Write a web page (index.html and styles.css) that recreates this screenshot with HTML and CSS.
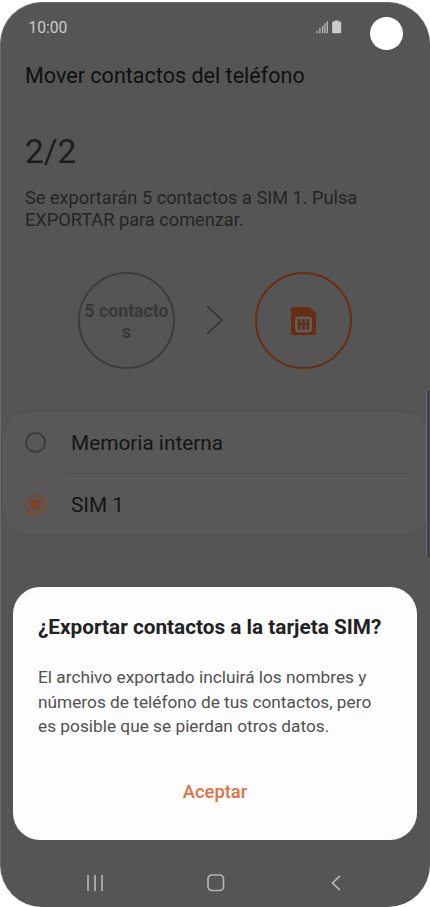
FILE: index.html
```html
<!DOCTYPE html>
<html lang="es">
<head>
<meta charset="utf-8">
<title>Mover contactos del teléfono</title>
<link rel="stylesheet" href="styles.css">
</head>
<body>
<div class="phone">
  <header class="status">
    <span class="clock">10:00</span>
    <svg class="status-icons" width="27" height="16" viewBox="0 0 27 16">
      <path class="signal" d="M1.2 10.7v2.5M3.9 8v5.2M6.6 6v7.2M8.9 3.2v10M11.3 1.2v12"/>
      <path class="battery" d="M18.6 1.4V.5h3.8v.9h1.8q1 0 1 1v9.8q0 1-1 1h-7q-1 0-1-1V2.400q0-1 1-1z"/>
    </svg>
    <span class="camera"></span>
  </header>
  <h1 class="title">Mover contactos del teléfono</h1>
  <p class="step">2/2</p>
  <p class="intro">Se exportarán 5 contactos a SIM 1. Pulsa<br>EXPORTAR para comenzar.</p>
  <section class="transfer">
    <div class="circle source">5 contacto<br>s</div>
    <svg class="arrow" width="18" height="30" viewBox="0 0 18 30"><path d="M1 1l15 14L1 29"/></svg>
    <div class="circle target">
      <svg width="25" height="28" viewBox="0 0 25 28">
        <path class="sim" d="M2 0H18.500L25 6.500V26q0 2-2 2H2q-2 0-2-2V2Q0 0 2 0z"/>
        <rect class="chip" x="5" y="10.400" width="15" height="14.200" rx="2"/>
        <path class="contacts" d="M7.900 12.200v10.600M17.100 12.200v10.600M12.500 12.200v3.800M12.500 18.800v4M7.900 17.400h9.200"/>
      </svg>
    </div>
  </section>
  <section class="options">
    <div class="option"><span class="radio"></span><span class="label">Memoria interna</span></div>
    <div class="divider"></div>
    <div class="option"><span class="radio selected"></span><span class="label">SIM 1</span></div>
  </section>
  <section class="dialog">
    <h2 class="dialog-title">¿Exportar contactos a la tarjeta SIM?</h2>
    <p class="dialog-text">El archivo exportado incluirá los nombres y<br>números de teléfono de tus contactos, pero<br>es posible que se pierdan otros datos.</p>
    <button class="accept">Aceptar</button>
  </section>
  <nav class="nav">
    <svg width="16" height="16" viewBox="0 0 16 16"><path d="M1 0v16M8 0v16M15 0v16"/></svg>
    <svg class="home" width="18" height="18" viewBox="0 0 18 18"><rect x="1" y="1" width="15.500" height="15.500" rx="4"/></svg>
    <svg width="10" height="16" viewBox="0 0 10 16"><path d="M9 .8L1.500 8L9 15.200"/></svg>
  </nav>
  <span class="edge"></span>
</div>
</body>
</html>
```
FILE: styles.css
```css
* { box-sizing: border-box; }
body { margin: 0; padding-top: 2px; background: #fff; font-family: Roboto, sans-serif; }
h1, h2, p { margin: 0; font-weight: 400; white-space: nowrap; }
svg { display: block; fill: none; flex: none; }
.phone {
  position: relative;
  width: 430px;
  height: 905px;
  overflow: hidden;
  border-radius: 42px;
  border-left: 1px solid #6a6a6a;
  border-top: 1px solid #6a6a6a;
  background: #555;
  display: flex;
  flex-direction: column;
}
.status { display: flex; height: 50px; padding: 0 27px; }
.clock { margin: 15px 0 0 .5px; font-size: 15.6px; line-height: 20px; color: #ccc; }
.status-icons { margin: 17px 27px 0 auto; }
.signal { stroke: #bdbdbd; stroke-width: 1.3; }
.battery { fill: #ccc; }
.camera { width: 33px; height: 33px; margin-top: 13.500px; border-radius: 50%; background: #fff; }
.title { height: 30px; margin: 8px 0 0 24px; font-size: 21.550px; line-height: 30px; color: #101010; }
.step { height: 40px; margin: 41px 0 0 24px; font-size: 33.400px; line-height: 40px; color: #1d1d1d; }
.intro { margin: 15px 0 0 24px; font-size: 18.200px; line-height: 21.5px; color: #242424; }
.transfer { display: flex; align-items: center; height: 98px; margin: 41px 0 0 77px; }
.circle { display: flex; align-items: center; justify-content: center; width: 97px; height: 97px; border: 2px solid #3c3c3c; border-radius: 50%; }
.source { padding-top: 3px; font-size: 17.700px; line-height: 21px; font-weight: 700; text-align: center; color: #383838; white-space: nowrap; }
.arrow { margin: 0 31px; stroke: #363636; stroke-width: 1.7; }
.target { border-color: #662d13; }
.target svg { margin-top: 1px; }
.sim { fill: #662d13; }
.chip { stroke: #6c6661; fill: #555; stroke-width: 1.5; }
.contacts { stroke: #662d13; stroke-width: 2.2; }
.options { height: 124px; margin: 42px -1px 0 0; border: 1px solid #505050; border-radius: 27px; background: #585858; }
.option { display: flex; align-items: center; height: 61px; padding-left: 23px; }
.radio { display: flex; align-items: center; justify-content: center; width: 21px; height: 21px; border: 2px solid #3c3c3c; border-radius: 50%; }
.selected { border-color: #7c482f; }
.selected::after { content: ""; width: 11px; height: 11px; border-radius: 50%; background: #7c4327; }
.label { margin-left: 25px; font-size: 20.800px; line-height: 26px; color: #151515; }
.divider { height: 1px; margin: 0 18px 0 63px; background: #4e4e4e; }
.dialog { height: 253px; width: 404px; margin: 52px 0 0 12px; padding: 26px 25px 0; border-radius: 27px; background: #fdfdfd; }
.dialog-title { font-size: 20.750px; line-height: 28px; font-weight: 700; color: #222; }
.dialog-text { margin-top: 24px; font-size: 17.270px; line-height: 24.700px; color: #515151; }
.accept { display: block; margin: 38.500px auto 0; padding: 0; border: 0; background: none; font: 500 18.400px/28px Roboto, sans-serif; color: #db7444; }
.nav { display: flex; align-items: center; justify-content: space-between; height: 18px; margin: 34px 89px 0 86px; }
.nav svg { stroke: #b5b5b5; stroke-width: 1.7; }
.nav .home { margin-right: 2px; }
.edge { position: absolute; right: -3px; top: 386px; width: 7px; height: 170px; border: 1px solid #6b6b72; border-radius: 5px; background: #41404f; }
```
